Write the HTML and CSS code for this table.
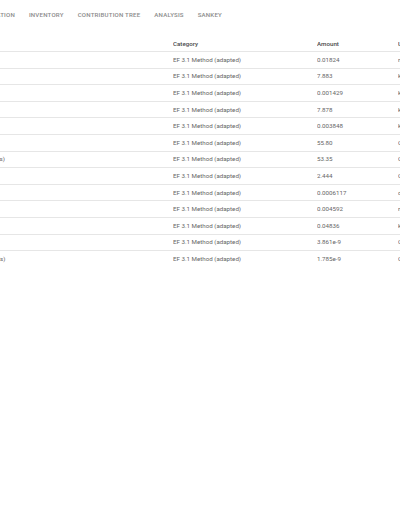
FILE: index.html
```html
<!DOCTYPE html>
<html>
<head>
<meta charset="utf-8">
<link rel="stylesheet" href="styles.css">
</head>
<body>
<div class="tabs">
  <div class="tab">Calculation</div>
  <div class="tab">Inventory</div>
  <div class="tab">Contribution tree</div>
  <div class="tab">Analysis</div>
  <div class="tab">Sankey</div>
</div>
<div class="table">
  <div class="row head">
    <div class="cell name">Impact category</div>
    <div class="cell cat">Category</div>
    <div class="cell amt">Amount</div>
    <div class="cell unit">Unit</div>
  </div>
  <div class="row"><div class="cell name">Acidification</div><div class="cell cat">EF 3.1 Method (adapted)</div><div class="cell amt">0.01824</div><div class="cell unit">mol H+ eq</div></div>
  <div class="row"><div class="cell name">Climate change</div><div class="cell cat">EF 3.1 Method (adapted)</div><div class="cell amt">7.883</div><div class="cell unit">kg CO2 eq</div></div>
  <div class="row"><div class="cell name">Eutrophication, marine</div><div class="cell cat">EF 3.1 Method (adapted)</div><div class="cell amt">0.001429</div><div class="cell unit">kg N eq</div></div>
  <div class="row"><div class="cell name">Climate change - Fossil</div><div class="cell cat">EF 3.1 Method (adapted)</div><div class="cell amt">7.878</div><div class="cell unit">kg CO2 eq</div></div>
  <div class="row"><div class="cell name">Eutrophication, freshwater</div><div class="cell cat">EF 3.1 Method (adapted)</div><div class="cell amt">0.003848</div><div class="cell unit">kg P eq</div></div>
  <div class="row"><div class="cell name">Ecotoxicity, freshwater</div><div class="cell cat">EF 3.1 Method (adapted)</div><div class="cell amt">55.80</div><div class="cell unit">CTUe</div></div>
  <div class="row"><div class="cell name">Ecotoxicity, freshwater - inorganics (metals)</div><div class="cell cat">EF 3.1 Method (adapted)</div><div class="cell amt">53.35</div><div class="cell unit">CTUe</div></div>
  <div class="row"><div class="cell name">Ecotoxicity, freshwater - organics</div><div class="cell cat">EF 3.1 Method (adapted)</div><div class="cell amt">2.444</div><div class="cell unit">CTUe</div></div>
  <div class="row"><div class="cell name">Particulate matter</div><div class="cell cat">EF 3.1 Method (adapted)</div><div class="cell amt">0.0006117</div><div class="cell unit">disease inc.</div></div>
  <div class="row"><div class="cell name">Eutrophication, terrestrial</div><div class="cell cat">EF 3.1 Method (adapted)</div><div class="cell amt">0.004592</div><div class="cell unit">mol N eq</div></div>
  <div class="row"><div class="cell name">Photochemical ozone formation</div><div class="cell cat">EF 3.1 Method (adapted)</div><div class="cell amt">0.04836</div><div class="cell unit">kg NMVOC eq</div></div>
  <div class="row"><div class="cell name">Human toxicity, cancer</div><div class="cell cat">EF 3.1 Method (adapted)</div><div class="cell amt">3.861e-9</div><div class="cell unit">CTUh</div></div>
  <div class="row last"><div class="cell name">Human toxicity, cancer - inorganics (metals)</div><div class="cell cat">EF 3.1 Method (adapted)</div><div class="cell amt">1.785e-9</div><div class="cell unit">CTUh</div></div>
</div>
</body>
</html>
```
FILE: styles.css
```css
html, body {
  margin: 0;
  padding: 0;
  background: #ffffff;
  overflow: hidden;
}
body {
  width: 400px;
  height: 516px;
  font-family: Roboto, "Liberation Sans", sans-serif;
  color: #616161;
}
.tabs {
  display: flex;
  justify-content: flex-end;
  width: 229px;
  height: 29px;
  align-items: center;
}
.tab {
  flex: none;
  padding: 0 7px;
  font-size: 6.1px;
  font-weight: 500;
  letter-spacing: 0.2px;
  text-transform: uppercase;
  color: #8a8a8a;
  white-space: nowrap;
}
.table {
  margin-top: 7px;
  margin-left: -123px;
  width: 573px;
}
.row {
  display: grid;
  grid-template-columns: 296px 144px 81px 52px;
  height: 16.6px;
  align-items: center;
  border-bottom: 1px solid #e6e6e6;
  box-sizing: border-box;
  font-size: 6.2px;
  color: #666;
}
.row.last {
  border-bottom: none;
}
.row.head {
  height: 16px;
  font-weight: 500;
  color: #4a4a4a;
}
.cell {
  white-space: nowrap;
  overflow: hidden;
}
.cell.name {
  padding-left: 8px;
}
```
